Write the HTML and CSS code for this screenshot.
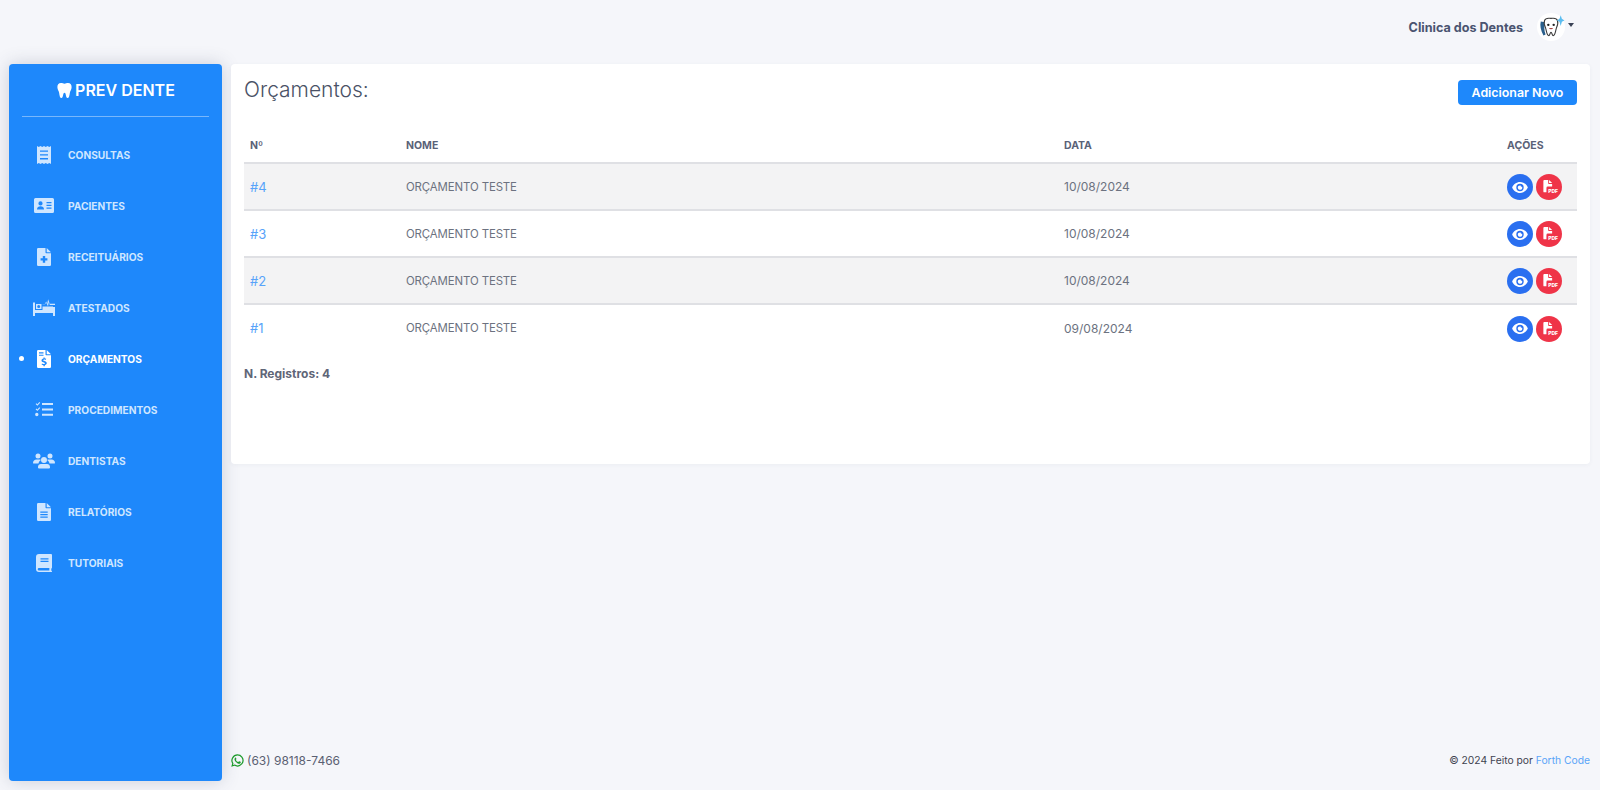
FILE: index.html
```html
<!DOCTYPE html>
<html lang="pt-BR">

<head>
    <meta charset="UTF-8">
    <meta name="viewport" content="width=device-width, initial-scale=1.0">
    <title>Orçamentos</title>
    <link rel="stylesheet" href="styles.css">
</head>

<body>
    <svg class="sprites" width="0" height="0">
        <symbol id="i-tooth" viewBox="0 0 24 24"><path d="M7 1.500c2 0 3.400 1 5 1s3-1 5-1c3.300 0 5.500 2.800 5 6.500-.4 3-2 4.700-2.400 7-.5 3-.9 7.500-3.300 7.500-2.700 0-1.800-7.500-4.300-7.500s-1.600 7.500-4.300 7.500c-2.400 0-2.800-4.500-3.300-7.500C4 12.700 2.400 11 2 8 1.500 4.300 3.700 1.500 7 1.500z"/></symbol>
        <symbol id="i-receipt" viewBox="0 0 14 18"><path fill-rule="evenodd" d="M0 0l1.750 1L3.500 0l1.750 1L7 0l1.750 1L10.500 0l1.750 1L14 0v18l-1.750-1-1.750 1-1.750-1L7 18l-1.750-1-1.750 1-1.750-1L0 18zM3 4.500v1.300h8V4.500zM3 8.300v1.300h8V8.300zM3 12.100v1.300h8v-1.300z"/></symbol>
        <symbol id="i-idcard" viewBox="0 0 20 15"><path fill-rule="evenodd" d="M1.500 0h17A1.500 1.500 0 0 1 20 1.500v12a1.500 1.500 0 0 1-1.500 1.500h-17A1.500 1.500 0 0 1 0 13.500v-12A1.500 1.500 0 0 1 1.500 0zM6.500 3.300a2.100 2.100 0 1 0 0 4.200 2.100 2.100 0 0 0 0-4.200zM3 11.500h7c0-2-1.500-3.200-3.500-3.200S3 9.500 3 11.500zM12.500 4v1.200h5V4zM12.500 6.800V8h5V6.800zM12.500 9.600v1.200h5V9.600z"/></symbol>
        <symbol id="i-filemed" viewBox="0 0 14 18"><path fill-rule="evenodd" d="M1.200 0H8.500v4.500a.8.800 0 0 0 .8.800H14v11.500a1.200 1.200 0 0 1-1.200 1.200H1.200A1.200 1.200 0 0 1 0 16.800V1.200A1.200 1.200 0 0 1 1.200 0zM9.700 0L14 4.200H9.700zM5.800 8v2.200H3.600v2.400h2.200v2.200h2.400v-2.200h2.200v-2.400H8.200V8z"/></symbol>
        <symbol id="i-bed" viewBox="0 0 22 17"><path fill-rule="evenodd" d="M0 3.500h2v7.500h18V8h2v9h-2v-3H2v3H0zM3 5h5.500v5H3zM5.700 6a1.500 1.500 0 1 0 0 3 1.500 1.500 0 0 0 0-3z"/><path d="M9.500 7.500H20V11H9.500zM9.500 5h2.300L13.200 2.500l1.100 2.200.8-4.400 1.600 4.500H22v1.300h-5.200l-1-2.800-.8 4-1.900-3.700-.9 1.700H9.500z"/></symbol>
        <symbol id="i-fileinv" viewBox="0 0 14 18"><path fill-rule="evenodd" d="M1.200 0H8.500v4.500a.8.800 0 0 0 .8.800H14v11.500a1.200 1.200 0 0 1-1.200 1.200H1.200A1.200 1.200 0 0 1 0 16.800V1.200A1.200 1.200 0 0 1 1.200 0zM9.700 0L14 4.200H9.700zM2 2.300v1.100h4.500V2.300zM2 4.700v1.100h4.500V4.700zM6.500 7.400v1c-1.200.2-2 1-2 2 0 2.300 3.500 1.700 3.500 2.900 0 .9-1.700.8-3 .1l-.4 1.200c.5.300 1.200.5 1.900.6v1h1.300v-1c1.300-.2 2-1.100 2-2.100 0-2.300-3.500-1.700-3.500-2.900 0-.8 1.400-.7 2.500-.2l.4-1.200c-.5-.2-1-.4-1.500-.4v-1z"/></symbol>
        <symbol id="i-tasks" viewBox="0 0 18 15"><path d="M.6 2L1.400 1.200l1 1L4.300 0l.9.800L2.400 3.700zM.6 7.300l.8-.8 1 1 1.900-2.200.9.800-2.800 2.900zM1.800 10.800a1.700 1.700 0 1 1 0 3.400 1.700 1.700 0 0 1 0-3.400zM7 1.100h11v2H7zM7 6.400h11v2H7zM7 11.700h11v2H7z"/></symbol>
        <symbol id="i-users" viewBox="0 0 22 16"><path d="M5 1a2.500 2.500 0 1 1 0 5 2.500 2.500 0 0 1 0-5zM17 1a2.500 2.500 0 1 1 0 5 2.500 2.500 0 0 1 0-5zM11 4.500a3 3 0 1 1 0 6 3 3 0 0 1 0-6zM0 10.500c0-2.200 1.500-3.500 3.500-3.500H6.500c.5 0 1 .1 1.400.4-1.300 .8-2.200 2-2.400 3.600H.8a.8.800 0 0 1-.8-.5zM22 10.500c0-2.200-1.500-3.500-3.500-3.500h-3c-.5 0-1 .1-1.400.4 1.300.8 2.200 2 2.400 3.600h4.700a.8.800 0 0 0 .8-.5zM8 11.500h6c1.700 0 3 1.200 3 2.900V15a1 1 0 0 1-1 1H6a1 1 0 0 1-1-1v-.6c0-1.700 1.300-2.900 3-2.900z"/></symbol>
        <symbol id="i-filealt" viewBox="0 0 14 18"><path fill-rule="evenodd" d="M1.200 0H8.500v4.500a.8.800 0 0 0 .8.800H14v11.500a1.200 1.200 0 0 1-1.200 1.200H1.200A1.200 1.200 0 0 1 0 16.800V1.200A1.200 1.200 0 0 1 1.200 0zM9.700 0L14 4.200H9.700zM3.300 8.500v1.300h7.400V8.500zM3.300 11v1.300h7.400V11zM3.300 13.500v1.300h7.400v-1.300z"/></symbol>
        <symbol id="i-book" viewBox="0 0 16 18"><path fill-rule="evenodd" d="M3 0h12a1 1 0 0 1 1 1v12.500a1 1 0 0 1-.6.900c-.2.800-.2 1.700 0 2.400.4.200.6.500.6.700a.5.500 0 0 1-.5.500H3a3 3 0 0 1-3-3V3a3 3 0 0 1 3-3zM4.500 4.300v1.200h8V4.300zM4.500 6.800V8h8V6.800zM3 14a1.300 1.300 0 0 0 0 2.600h10.400c-.1-.9-.1-1.800 0-2.600z"/></symbol>
        <symbol id="i-eye" viewBox="0 0 20 14"><path fill-rule="evenodd" d="M10 0c4.500 0 8.200 2.900 10 7-1.800 4.100-5.500 7-10 7S1.800 11.100 0 7c1.800-4.100 5.500-7 10-7zM10 2.300a4.700 4.700 0 1 0 0 9.400 4.700 4.700 0 0 0 0-9.400zM10 4.300c.3 0 .6 0 .9.100a1.500 1.500 0 0 0 1.700 1.700A2.800 2.800 0 1 1 10 4.300z"/></symbol>
        <symbol id="i-pdf" viewBox="0 0 14 16"><path d="M1 0h4.500v3.800c0 .4.300.7.700.7H10v3H5a1.500 1.500 0 0 0-1.500 1.500v5H1a1 1 0 0 1-1-1V1a1 1 0 0 1 1-1zM6.500 0L10 3.500H6.500z"/></symbol>
        <symbol id="i-whats" viewBox="0 0 24 24"><path fill-rule="evenodd" d="M12 .5A11.400 11.400 0 0 0 2.200 17.700L.5 23.500l6-1.600A11.400 11.400 0 1 0 12 .5zm0 2.300a9.100 9.100 0 1 1-4.900 16.800l-3.400.9.900-3.300A9.100 9.100 0 0 1 12 2.800zM8.200 6.800c-.5 0-1.800 1-1.800 3 0 2.500 3.400 6.800 7 8 2.300.7 4.300-.4 4.600-2.200.1-.7 0-1-.2-1.200l-2.500-1.200c-.3-.1-.5 0-.7.200l-1 1.300c-.2.200-.4.200-.7.100-1.800-.8-3-2-3.900-3.700-.1-.3 0-.5.100-.6l.8-1c.1-.2.200-.4 0-.7l-1-2.500c-.2-.4-.4-.5-.7-.5z"/></symbol>
    </svg>

    <div class="app">
        <aside class="sidebar">
            <div class="brand">
                <svg class="brand_icon"><use href="#i-tooth"></use></svg>
                <span>PREV DENTE</span>
            </div>
            <ul class="menu">
                <li><a href="#"><span class="ico"><svg class="w14"><use href="#i-receipt"></use></svg></span>CONSULTAS</a></li>
                <li><a href="#"><span class="ico"><svg class="w20"><use href="#i-idcard"></use></svg></span>PACIENTES</a></li>
                <li><a href="#"><span class="ico"><svg class="w14"><use href="#i-filemed"></use></svg></span>RECEITUÁRIOS</a></li>
                <li><a href="#"><span class="ico"><svg class="w22"><use href="#i-bed"></use></svg></span>ATESTADOS</a></li>
                <li class="active"><a href="#"><span class="ico"><svg class="w14"><use href="#i-fileinv"></use></svg></span>ORÇAMENTOS</a></li>
                <li><a href="#"><span class="ico"><svg class="w18"><use href="#i-tasks"></use></svg></span>PROCEDIMENTOS</a></li>
                <li><a href="#"><span class="ico"><svg class="w22"><use href="#i-users"></use></svg></span>DENTISTAS</a></li>
                <li><a href="#"><span class="ico"><svg class="w14"><use href="#i-filealt"></use></svg></span>RELATÓRIOS</a></li>
                <li><a href="#"><span class="ico"><svg class="w16"><use href="#i-book"></use></svg></span>TUTORIAIS</a></li>
            </ul>
        </aside>

        <div class="main">
            <header class="topbar">
                <span class="user_name">Clinica dos Dentes</span>
                <span class="avatar">
                    <svg viewBox="0 0 26 26" width="28" height="28">
                        <circle cx="13" cy="13" r="13" fill="#fff"/>
                        <path d="M3.500 8c-1 4 0 8 2.500 13l2-1c-1.500-4-1.500-8-.5-11.500z" fill="#2a5f8c"/>
                        <path d="M13 5c-2 0-5-1-6 2-1 3 0 5 1 7 1 3 1 7 3 7 1 0 1-3 2-3s1 3 2 3c2 0 2-4 3-7 1-2 2-4 1-7-1-3-4-2-6-2z" fill="#fff" stroke="#3c3c3c" stroke-width="1"/>
                        <circle cx="10.500" cy="11" r="1.100" fill="#222"/>
                        <circle cx="15.500" cy="11" r="1.100" fill="#222"/>
                        <path d="M11 14c1 1.500 3 1.500 4 0z" fill="#a44"/>
                        <path d="M22 2l1.100 3.400L25.500 7l-2.400 1.100L22 12l-1.100-3.900L18.500 7l2.400-1.600z" fill="#5cbdf0"/>
                    </svg>
                </span>
                <span class="caret"></span>
            </header>

            <section class="card">
                <div class="card_head">
                    <h3>Orçamentos:</h3>
                    <a class="btn" href="#">Adicionar Novo</a>
                </div>
                <table class="list">
                    <thead>
                        <tr>
                            <th class="c1">Nº</th>
                            <th class="c2">NOME</th>
                            <th class="c3">DATA</th>
                            <th>AÇÕES</th>
                        </tr>
                    </thead>
                    <tbody>
                        <tr>
                            <td><a href="#">#4</a></td>
                            <td class="name">ORÇAMENTO TESTE</td>
                            <td>10/08/2024</td>
                            <td class="acts"><span class="round blue"><svg class="eye"><use href="#i-eye"></use></svg></span><span class="round red"><svg class="pdf"><use href="#i-pdf"></use></svg><b>PDF</b></span></td>
                        </tr>
                        <tr>
                            <td><a href="#">#3</a></td>
                            <td class="name">ORÇAMENTO TESTE</td>
                            <td>10/08/2024</td>
                            <td class="acts"><span class="round blue"><svg class="eye"><use href="#i-eye"></use></svg></span><span class="round red"><svg class="pdf"><use href="#i-pdf"></use></svg><b>PDF</b></span></td>
                        </tr>
                        <tr>
                            <td><a href="#">#2</a></td>
                            <td class="name">ORÇAMENTO TESTE</td>
                            <td>10/08/2024</td>
                            <td class="acts"><span class="round blue"><svg class="eye"><use href="#i-eye"></use></svg></span><span class="round red"><svg class="pdf"><use href="#i-pdf"></use></svg><b>PDF</b></span></td>
                        </tr>
                        <tr>
                            <td><a href="#">#1</a></td>
                            <td class="name">ORÇAMENTO TESTE</td>
                            <td>09/08/2024</td>
                            <td class="acts"><span class="round blue"><svg class="eye"><use href="#i-eye"></use></svg></span><span class="round red"><svg class="pdf"><use href="#i-pdf"></use></svg><b>PDF</b></span></td>
                        </tr>
                    </tbody>
                </table>
                <p class="total">N. Registros: 4</p>
            </section>

            <footer class="foot">
                <span class="phone"><svg class="whats"><use href="#i-whats"></use></svg>(63) 98118-7466</span>
                <span class="copy">© 2024 Feito por <a href="#">Forth Code</a></span>
            </footer>
        </div>
    </div>
</body>

</html>
```

FILE: styles.css
```css
* {
    margin: 0;
    padding: 0;
    box-sizing: border-box;
}

body {
    background-color: #f5f6fa;
    font-family: "Inter", "Liberation Sans", sans-serif;
    color: #5f6678;
    height: 790px;
    overflow: hidden;
}

a {
    text-decoration: none;
}

ul {
    list-style: none;
}

.sprites {
    position: absolute;
}

svg {
    fill: currentColor;
}

.app {
    display: flex;
    height: 790px;
}

.sidebar {
    width: 213px;
    height: 717px;
    margin: 64px 0 0 9px;
    flex: none;
    background: #1e88fb;
    border-radius: 4px;
    box-shadow: 0 0 18px rgba(60, 70, 100, .22);
}

.brand {
    display: flex;
    align-items: center;
    justify-content: center;
    gap: 2px;
    height: 53px;
    margin: 0 13px;
    border-bottom: 1px solid rgba(255, 255, 255, .4);
    color: #fff;
    font-size: 16px;
    font-weight: 600;
}

.brand_icon {
    width: 17px;
    height: 17px;
}

.menu {
    padding-top: 12px;
}

.menu li {
    height: 51px;
    position: relative;
}

.menu a {
    display: flex;
    align-items: center;
    height: 51px;
    padding-left: 24px;
    font-size: 10.2px;
    font-weight: 700;
    color: #cfe6ff;
}

.ico {
    width: 22px;
    margin-right: 13px;
    display: flex;
    justify-content: center;
    flex: none;
}

.w14 {
    width: 14px;
    height: 18px;
}

.w16 {
    width: 16px;
    height: 18px;
}

.w18 {
    width: 18px;
    height: 15px;
}

.w20 {
    width: 20px;
    height: 15px;
}

.w22 {
    width: 22px;
    height: 17px;
}

.menu .active a {
    color: #fff;
}

.menu .active::before {
    content: "";
    position: absolute;
    left: 10px;
    top: 23px;
    width: 5px;
    height: 5px;
    border-radius: 50%;
    background: #fff;
}

.main {
    flex: 1;
    display: flex;
    flex-direction: column;
    padding: 0 10px 0 9px;
    min-width: 0;
}

.topbar {
    height: 64px;
    flex: none;
    display: flex;
    align-items: center;
    justify-content: flex-end;
    padding: 0 0 10px;
}

.user_name {
    font-size: 12.6px;
    font-weight: 700;
    color: #4a5470;
}

.avatar {
    margin-left: 14px;
    width: 28px;
    height: 28px;
    display: block;
}

.caret {
    margin: 0 16px 4px 3px;
    border-top: 4px solid #3a4256;
    border-left: 3.5px solid transparent;
    border-right: 3.5px solid transparent;
}

.card {
    height: 400px;
    flex: none;
    background: #fff;
    border-radius: 4px;
    padding: 0 13px;
    box-shadow: 0 1px 4px rgba(60, 70, 100, .05);
}

.card_head {
    display: flex;
    justify-content: space-between;
    align-items: flex-start;
    height: 61px;
    padding-top: 16px;
}

h3 {
    font-size: 21px;
    font-weight: 300;
    line-height: 20px;
    color: #4a5266;
}

.btn {
    width: 119px;
    height: 25px;
    line-height: 25px;
    text-align: center;
    background: #1e88fb;
    color: #fff;
    border-radius: 4px;
    font-size: 12.4px;
    font-weight: 600;
}

.list {
    width: 100%;
    border-collapse: collapse;
    table-layout: fixed;
}

.c1 {
    width: 156px;
}

.c2 {
    width: 658px;
}

.c3 {
    width: 443px;
}

th {
    height: 38px;
    padding: 3px 6px 0;
    text-align: left;
    font-size: 10.5px;
    font-weight: 700;
    color: #5a6278;
    border-bottom: 2px solid #dfe0e4;
}

td {
    height: 47px;
    padding: 0 6px;
    font-size: 12px;
    color: #6c7280;
    border-bottom: 2px solid #dfe0e4;
}

td.name {
    font-size: 11.4px;
    letter-spacing: -.1px;
}

tbody tr:nth-child(odd) td {
    background: #f3f3f4;
}

tbody tr:last-child td {
    border-bottom: 0;
}

td a {
    color: #57a3fa;
    font-size: 13px;
}

.acts {
    white-space: nowrap;
    padding-top: 1px;
}

.round {
    display: inline-flex;
    align-items: center;
    justify-content: center;
    width: 26px;
    height: 26px;
    border-radius: 50%;
    margin-right: 3px;
    color: #fff;
    position: relative;
    vertical-align: middle;
}

.blue {
    background: #2a6ff0;
}

.red {
    background: #ef3448;
}

.eye {
    width: 16px;
    height: 11px;
}

.pdf {
    width: 13px;
    height: 14px;
}

.red b {
    position: absolute;
    right: 4px;
    bottom: 6px;
    font-size: 5px;
    font-weight: 800;
    line-height: 6px;
}

.total {
    margin-top: 15px;
    font-size: 12px;
    font-weight: 700;
    color: #5f6678;
}

.foot {
    margin-top: auto;
    height: 37px;
    display: flex;
    justify-content: space-between;
    align-items: flex-start;
}

.phone {
    display: flex;
    align-items: center;
    gap: 3px;
    font-size: 12px;
    color: #5a6072;
}

.whats {
    width: 13px;
    height: 13px;
    color: #1d9a2c;
}

.copy {
    font-size: 10.3px;
    color: #3f4350;
    line-height: 15px;
}

.copy a {
    color: #5aa5f8;
}
```
